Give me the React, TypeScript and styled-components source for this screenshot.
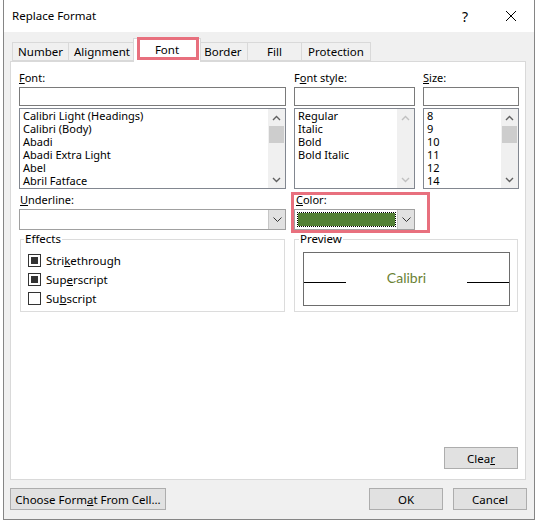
import React from "react";
import styled, { createGlobalStyle } from "styled-components";

const FONT = `"Noto Sans", "Open Sans", sans-serif`;

const Global = createGlobalStyle`
  html, body { margin: 0; padding: 0; background: #fff; }
  body { font-family: ${FONT}; font-size: 11px; color: #000; }
  * { box-sizing: border-box; }
`;

const Window = styled.div`
  margin-left: 3px;
  width: 532px;
  height: 520px;
  border: 1px solid #858585;
  border-top: none;
  background: #f0f0f0;
  display: flex;
  flex-direction: column;
`;

const TitleBar = styled.div`
  height: 32px;
  flex: 0 0 32px;
  background: #fff;
  display: flex;
  align-items: center;
  padding-left: 8px;
`;

const Title = styled.div`
  flex: 1;
  font-size: 11.5px;
  line-height: 16px;
`;

const CaptionButton = styled.div`
  width: 46px;
  height: 32px;
  display: flex;
  align-items: center;
  justify-content: center;
  font-size: 14px;
`;

const Body = styled.div`
  flex: 1;
  display: flex;
  flex-direction: column;
  padding: 6px 8px 0 6px;
`;

const TabStrip = styled.div`
  height: 23px;
  display: flex;
  align-items: flex-end;
  padding-left: 3px;
`;

const Tab = styled.div<{ $w: number; $active?: boolean }>`
  position: relative;
  width: ${(p) => (p.$active ? p.$w + 4 : p.$w)}px;
  height: ${(p) => (p.$active ? 24 : 19)}px;
  margin-left: ${(p) => (p.$active ? -3 : -1)}px;
  margin-right: ${(p) => (p.$active ? -2 : 0)}px;
  margin-bottom: ${(p) => (p.$active ? -1 : 0)}px;
  z-index: ${(p) => (p.$active ? 2 : 1)};
  border: 1px solid #d9d9d9;
  border-bottom: ${(p) => (p.$active ? "none" : "1px solid #d9d9d9")};
  background: ${(p) => (p.$active ? "#fff" : "#f0f0f0")};
  display: flex;
  align-items: center;
  justify-content: center;
  font-size: 11.5px;
  padding-bottom: ${(p) => (p.$active ? 3 : 0)}px;
  &::after {
    content: "";
    display: ${(p) => (p.$active ? "block" : "none")};
    position: absolute;
    left: 3px;
    right: 1px;
    top: -2px;
    bottom: 2px;
    border: 3px solid #e8707e;
  }
`;

const Panel = styled.div`
  height: 419px;
  flex: 0 0 419px;
  border: 1px solid #d9d9d9;
  background: #fff;
  padding: 8px 6px 10px 8px;
  display: flex;
  flex-direction: column;
`;

const FieldGrid = styled.div<{ $mt?: number }>`
  display: grid;
  grid-template-columns: 267px 121px 96px;
  column-gap: 8px;
  margin-top: ${(p) => p.$mt ?? 0}px;
`;

const Field = styled.div<{ $highlight?: boolean }>`
  position: relative;
  display: flex;
  flex-direction: column;
  &::after {
    content: "";
    display: ${(p) => (p.$highlight ? "block" : "none")};
    position: absolute;
    left: -3px;
    right: -15px;
    top: 0px;
    bottom: -3px;
    border: 3px solid #e8707e;
  }
`;

const Label = styled.div<{ $indent?: number }>`
  height: 16px;
  line-height: 16px;
  margin-bottom: 1px;
  padding-left: ${(p) => p.$indent ?? 0}px;
`;

const Key = styled.span`
  text-decoration: underline;
  text-underline-offset: 1px;
`;

const TextBox = styled.div`
  height: 19px;
  border: 1px solid #7a7a7a;
  background: #fff;
`;

const ListBox = styled.div`
  height: 81px;
  margin-top: 2px;
  border: 1px solid #828790;
  background: #fff;
  display: flex;
`;

const ListItems = styled.div`
  flex: 1;
  padding: 0 3px;
  overflow: hidden;
`;

const ListItem = styled.div`
  line-height: 13px;
  height: 13px;
  white-space: nowrap;
`;

const ScrollBar = styled.div`
  flex: 0 0 17px;
  width: 17px;
  background: #f0f0f0;
  display: flex;
  flex-direction: column;
`;

const ScrollArrow = styled.div`
  height: 17px;
  flex: 0 0 17px;
  display: flex;
  align-items: center;
  justify-content: center;
`;

const ScrollTrack = styled.div`
  flex: 1;
  padding: 0 1px;
`;

const Thumb = styled.div`
  height: 17px;
  background: #cdcdcd;
`;

const Combo = styled.div`
  height: 21px;
  border: 1px solid #a0a0a0;
  background: #fff;
  display: flex;
`;

const ComboFill = styled.div`
  flex: 1;
`;

const SwatchFrame = styled.div`
  flex: 1;
  margin: 2px 1px 2px 2px;
  border: 1px dotted #000;
  display: flex;
`;

const Swatch = styled.div<{ $color: string }>`
  flex: 1;
  background: ${(p) => p.$color};
`;

const DropButton = styled.div`
  width: 17px;
  flex: 0 0 17px;
  background: #e1e1e1;
  border-left: 1px solid #c6c6c6;
  display: flex;
  align-items: center;
  justify-content: center;
`;

const Group = styled.fieldset<{ $span?: string; $inset?: string }>`
  grid-column: ${(p) => p.$span ?? "auto"};
  margin: ${(p) => p.$inset ?? "0"};
  height: 80px;
  border: 1px solid #dcdcdc;
  padding: 5px 0 0 ${(p) => (p.$span ? 4 : 3)}px;
  min-width: 0;
`;

const Legend = styled.legend`
  padding: 0 1px;
  line-height: 14px;
  font-size: 11.5px;
`;

const CheckRow = styled.div`
  height: 19px;
  display: flex;
  align-items: center;
  gap: 5px;
  margin-left: 4px;
  font-size: 11.5px;
`;

const CheckBox = styled.span<{ $checked?: boolean }>`
  width: 13px;
  height: 13px;
  border: 1px solid #333;
  background: #fff;
  display: inline-flex;
  align-items: center;
  justify-content: center;
  &::after {
    content: "";
    width: 7px;
    height: 7px;
    background: ${(p) => (p.$checked ? "#333" : "transparent")};
  }
`;

const PreviewBox = styled.div`
  margin: 1px 0 0 4px;
  width: 207px;
  height: 54px;
  border: 1px solid #6d6d6d;
  display: flex;
  align-items: baseline;
  padding-top: 16px;
`;

const PreviewLine = styled.div`
  width: 42px;
  height: 1px;
  background: #000;
`;

const PreviewText = styled.div`
  flex: 1;
  text-align: center;
  font-family: Lato, "Noto Sans", sans-serif;
  font-size: 14px;
  line-height: 18px;
  color: #6a8134;
`;

const ClearRow = styled.div`
  margin-top: auto;
  display: flex;
  justify-content: flex-end;
  padding-right: 1px;
`;

const Button = styled.div<{ $w: number }>`
  width: ${(p) => p.$w}px;
  height: 22px;
  border: 1px solid #adadad;
  background: #e1e1e1;
  display: flex;
  align-items: center;
  justify-content: center;
  font-size: 11.5px;
`;

const Footer = styled.div`
  margin-top: 8px;
  padding: 0 7px 9px 6px;
  display: flex;
  gap: 10px;
`;

const FooterSpacer = styled.div`
  flex: 1;
`;

const Chevron = ({ up, color = "#606060" }: { up?: boolean; color?: string }) => (
  <svg width="9" height="6" viewBox="0 0 9 6">
    <polyline
      points={up ? "1,5 4.5,1.5 8,5" : "1,1 4.5,4.5 8,1"}
      fill="none"
      stroke={color}
      strokeWidth="1.4"
    />
  </svg>
);

const ThinChevron = () => (
  <svg width="9" height="5" viewBox="0 0 9 5">
    <polyline points="0.5,0.5 4.5,4.5 8.5,0.5" fill="none" stroke="#333" strokeWidth="1" />
  </svg>
);

const Scroll = ({ disabled }: { disabled?: boolean }) => (
  <ScrollBar>
    <ScrollArrow>
      <Chevron up color={disabled ? "#c0c0c0" : "#606060"} />
    </ScrollArrow>
    <ScrollTrack>{!disabled && <Thumb />}</ScrollTrack>
    <ScrollArrow>
      <Chevron color={disabled ? "#c0c0c0" : "#606060"} />
    </ScrollArrow>
  </ScrollBar>
);

const tabs = [
  { label: "Number", w: 57 },
  { label: "Alignment", w: 68 },
  { label: "Font", w: 64, active: true },
  { label: "Border", w: 50 },
  { label: "Fill", w: 55 },
  { label: "Protection", w: 70 },
];

const fonts = [
  "Calibri Light (Headings)",
  "Calibri (Body)",
  "Abadi",
  "Abadi Extra Light",
  "Abel",
  "Abril Fatface",
];
const styles = ["Regular", "Italic", "Bold", "Bold Italic"];
const sizes = ["8", "9", "10", "11", "12", "14"];

export default function App() {
  return (
    <>
      <Global />
      <Window>
        <TitleBar>
          <Title>Replace Format</Title>
          <CaptionButton>?</CaptionButton>
          <CaptionButton>
            <svg width="10" height="10" viewBox="0 0 10 10">
              <line x1="0" y1="0" x2="10" y2="10" stroke="#000" strokeWidth="1" />
              <line x1="10" y1="0" x2="0" y2="10" stroke="#000" strokeWidth="1" />
            </svg>
          </CaptionButton>
        </TitleBar>
        <Body>
          <TabStrip>
            {tabs.map((t) => (
              <Tab key={t.label} $w={t.w} $active={t.active}>
                {t.label}
              </Tab>
            ))}
          </TabStrip>
          <Panel>
            <FieldGrid>
              <Field>
                <Label>
                  <Key>F</Key>ont:
                </Label>
                <TextBox />
                <ListBox>
                  <ListItems>
                    {fonts.map((f) => (
                      <ListItem key={f}>{f}</ListItem>
                    ))}
                  </ListItems>
                  <Scroll />
                </ListBox>
              </Field>
              <Field>
                <Label>
                  F<Key>o</Key>nt style:
                </Label>
                <TextBox />
                <ListBox>
                  <ListItems>
                    {styles.map((f) => (
                      <ListItem key={f}>{f}</ListItem>
                    ))}
                  </ListItems>
                  <Scroll disabled />
                </ListBox>
              </Field>
              <Field>
                <Label>
                  <Key>S</Key>ize:
                </Label>
                <TextBox />
                <ListBox>
                  <ListItems>
                    {sizes.map((f) => (
                      <ListItem key={f}>{f}</ListItem>
                    ))}
                  </ListItems>
                  <Scroll />
                </ListBox>
              </Field>
            </FieldGrid>
            <FieldGrid $mt={3}>
              <Field>
                <Label $indent={1}>
                  <Key>U</Key>nderline:
                </Label>
                <Combo>
                  <ComboFill />
                  <DropButton>
                    <ThinChevron />
                  </DropButton>
                </Combo>
              </Field>
              <Field $highlight>
                <Label $indent={2}>
                  <Key>C</Key>olor:
                </Label>
                <Combo>
                  <SwatchFrame>
                    <Swatch $color="#538135" />
                  </SwatchFrame>
                  <DropButton>
                    <ThinChevron />
                  </DropButton>
                </Combo>
              </Field>
            </FieldGrid>
            <FieldGrid $mt={2}>
              <Group $inset="0 1px">
                <Legend>Effects</Legend>
                <CheckRow>
                  <CheckBox $checked />
                  <span>
                    Stri<Key>k</Key>ethrough
                  </span>
                </CheckRow>
                <CheckRow>
                  <CheckBox $checked />
                  <span>
                    Sup<Key>e</Key>rscript
                  </span>
                </CheckRow>
                <CheckRow>
                  <CheckBox />
                  <span>
                    Su<Key>b</Key>script
                  </span>
                </CheckRow>
              </Group>
              <Group $span="2 / 4" $inset="0 1px 0 0">
                <Legend>Preview</Legend>
                <PreviewBox>
                  <PreviewLine />
                  <PreviewText>Calibri</PreviewText>
                  <PreviewLine />
                </PreviewBox>
              </Group>
            </FieldGrid>
            <ClearRow>
              <Button $w={74}>
                <span>
                  Clea<Key>r</Key>
                </span>
              </Button>
            </ClearRow>
          </Panel>
        </Body>
        <Footer>
          <Button $w={156}>
            <span>
              Choose Form<Key>a</Key>t From Cell...
            </span>
          </Button>
          <FooterSpacer />
          <Button $w={74}>OK</Button>
          <Button $w={74}>Cancel</Button>
        </Footer>
      </Window>
    </>
  );
}
